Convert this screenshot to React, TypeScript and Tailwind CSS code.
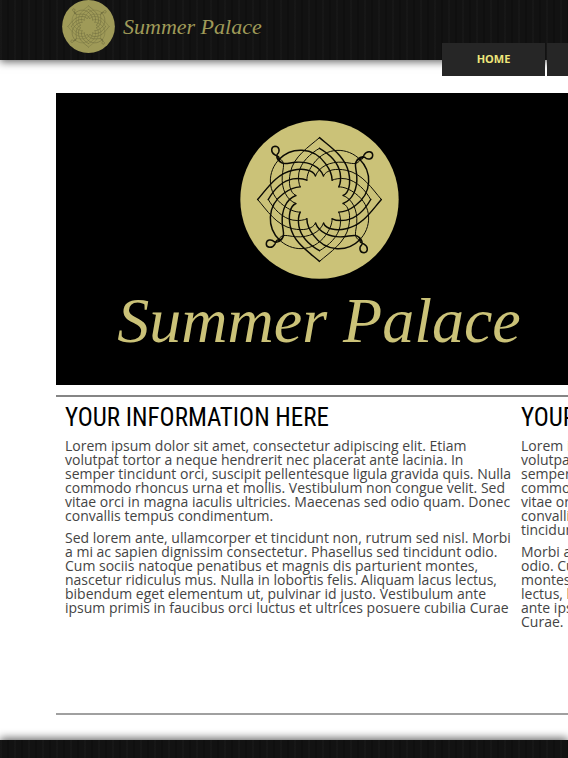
import React from "react";

const strands = [
  "M-186 0 C-158 -32 -130 -78 -80 -88 C-50 -94 -20 -90 -12 -71",
  "M-154 0 C-138 -28 -112 -56 -80 -62 C-62 -65 -46 -62 -38 -58",
  "M-122 -120 C-85 -158 -20 -160 18 -108 C30 -92 38 -75 38 -58",
  "M-124 -122 C-114 -100 -96 -110 -72 -112 C-30 -115 2 -98 12 -71",
];

const loop =
  "M-122 -116 C-118 -128 -124 -130 -134 -134 C-148 -142 -146 -159 -134 -160 C-120 -160 -118 -144 -127 -136 C-132 -126 -126 -120 -120 -114";

function Emblem({ className, line }: { className: string; line: string }) {
  const turns = [0, 90, 180, 270];
  return (
    <svg viewBox="-239 -239 478 478" className={className} aria-hidden="true">
      <circle r="238" fill="currentColor" />
      <g fill="none" stroke={line} strokeLinejoin="round" strokeLinecap="round">
        {turns.map((turn) => (
          <g key={turn} transform={`rotate(${turn})`}>
            {strands.map((d) => (
              <path key={d} d={d} strokeWidth="4.4" />
            ))}
            <g transform="scale(-1 1)">
              {strands.map((d) => (
                <path key={d} d={d} strokeWidth="3" />
              ))}
            </g>
            <path d={loop} strokeWidth="4.4" />
          </g>
        ))}
      </g>
    </svg>
  );
}

const texture =
  "bg-[#121212] bg-[repeating-linear-gradient(90deg,#ffffff05_0px,#ffffff05_2px,transparent_2px,transparent_7px,#00000030_7px,#00000030_9px,transparent_9px,transparent_14px)]";

const script = "font-['Liberation_Serif',serif] italic whitespace-nowrap";

function Column({ children }: { children: React.ReactNode }) {
  return (
    <section className="w-[448px] shrink-0">
      <h2 className="font-['Roboto_Condensed','Liberation_Sans_Narrow',Roboto,sans-serif] text-[25px] leading-[30px] whitespace-nowrap text-black">
        YOUR INFORMATION HERE
      </h2>
      <div className="mt-1.5 space-y-2 font-['Open_Sans',sans-serif] text-sm leading-[14px] text-[#444444]">
        {children}
      </div>
    </section>
  );
}

export default function App() {
  return (
    <div className="flex min-h-screen flex-col overflow-hidden bg-white">
      <header className={`relative flex h-[60px] shrink-0 items-start pl-[62px] shadow-[0_2px_8px_#00000099] ${texture}`}>
        <a href="#home" className="flex h-[53px] items-center gap-2 text-[#9f9a58]">
          <Emblem className="size-[53px]" line="#68663b" />
          <span className={`text-[22px] ${script}`}>Summer Palace</span>
        </a>
        <nav className="absolute top-[43px] left-[442px] flex gap-0.5 font-['Open_Sans',sans-serif] text-[11px] font-bold">
          <a href="#home" className="flex h-[33px] w-[103px] items-center justify-center bg-[#262626] text-[#eee77b]">
            HOME
          </a>
          <a href="#more" aria-label="More" className="h-[33px] w-[103px] bg-[#262626]" />
        </nav>
      </header>

      <main className="ml-14 flex min-w-[928px] grow flex-col pt-[33px] pb-[25px]">
        <div className="flex bg-black pt-[27px] pb-[26px] pl-[54px] text-[#cbc278]">
          <div className="flex w-[418px] flex-col items-center">
            <Emblem className="size-[159px]" line="#0c0b05" />
            <h1 className={`mt-1 text-[64px] leading-[76px] ${script}`}>Summer Palace</h1>
          </div>
        </div>
        <div className="mt-2.5 flex grow gap-2 border-y-2 border-t-[#858585] border-b-[#a0a0a0] pt-1.5 pl-[9px]">
          <Column>
            <p>
              Lorem ipsum dolor sit amet, consectetur adipiscing elit. Etiam volutpat tortor a neque hendrerit nec
              placerat ante lacinia. In semper tincidunt orci, suscipit pellentesque ligula gravida quis. Nulla commodo
              rhoncus urna et mollis. Vestibulum non congue velit. Sed vitae orci in magna iaculis ultricies. Maecenas
              sed odio quam. Donec convallis tempus condimentum.
            </p>
            <p>
              Sed lorem ante, ullamcorper et tincidunt non, rutrum sed nisl. Morbi a mi ac sapien dignissim
              consectetur. Phasellus sed tincidunt odio. Cum sociis natoque penatibus et magnis dis parturient montes,
              nascetur ridiculus mus. Nulla in lobortis felis. Aliquam lacus lectus, bibendum eget elementum ut,
              pulvinar id justo. Vestibulum ante ipsum primis in faucibus orci luctus et ultrices posuere cubilia Curae
            </p>
          </Column>
          <Column>
            <p>
              Lorem ipsum dolor sit amet, consectetur adipiscing elit. Etiam volutpat tortor a neque hendrerit nec
              placerat ante lacinia. In semper tincidunt orci, suscipit pellentesque ligula gravida quis. Nulla commodo
              rhoncus urna et mollis. Vestibulum non congue velit. Sed vitae orci in magna iaculis ultricies. Maecenas
              sed odio quam. Donec convallis tempus condimentum. Sed lorem ante, ullamcorper et tincidunt non, rutrum
              sed nisl.
            </p>
            <p>
              Morbi a mi ac sapien dignissim consectetur. Phasellus sed tincidunt
              <br />
              odio. Cum sociis natoque penatibus et magnis dis parturient
              <br />
              montes, nascetur ridiculus mus. Nulla in lobortis felis. Aliquam lacus
              <br />
              lectus, bibendum eget elementum ut, pulvinar id justo. Vestibulum
              <br />
              ante ipsum primis in faucibus orci luctus et ultrices posuere cubilia
              <br />
              Curae.
            </p>
          </Column>
        </div>
      </main>

      <footer className={`h-[18px] shrink-0 shadow-[0_-2px_8px_#00000099] ${texture}`} />
    </div>
  );
}
